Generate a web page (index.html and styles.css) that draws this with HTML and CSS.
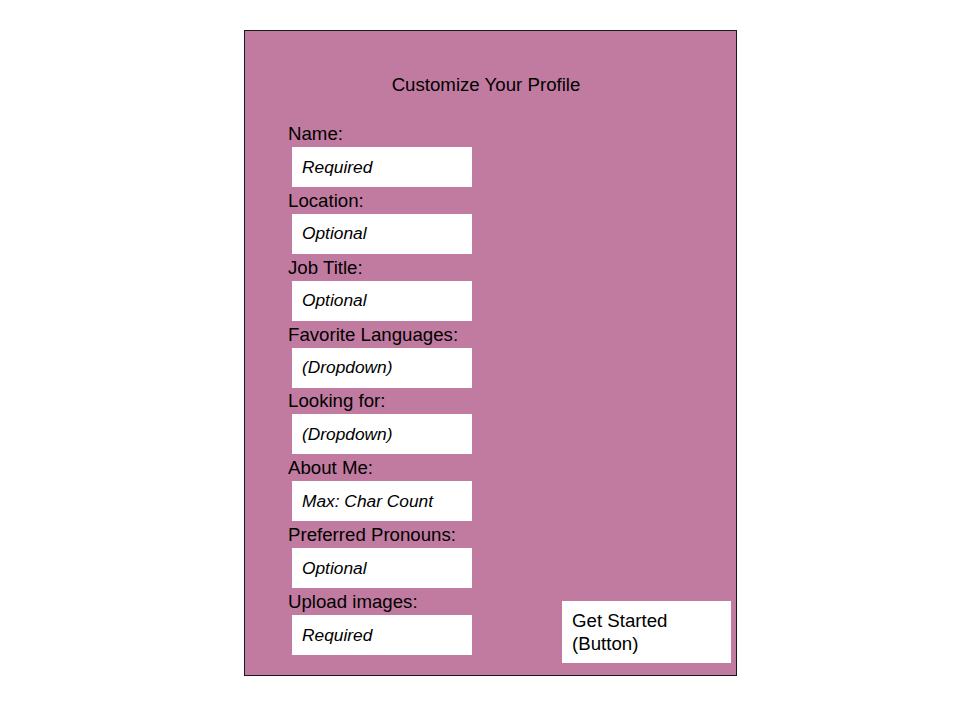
FILE: index.html
```html
<!DOCTYPE html>
<html>
<head>
<meta charset="utf-8">
<link rel="stylesheet" href="styles.css">
</head>
<body>
<div class="card">
  <div class="title">Customize Your Profile</div>
  <div class="body">
    <div class="form">
      <div class="field"><div class="label">Name:</div><div class="input">Required</div></div>
      <div class="field"><div class="label">Location:</div><div class="input">Optional</div></div>
      <div class="field"><div class="label">Job Title:</div><div class="input">Optional</div></div>
      <div class="field"><div class="label">Favorite Languages:</div><div class="input">(Dropdown)</div></div>
      <div class="field"><div class="label">Looking for:</div><div class="input">(Dropdown)</div></div>
      <div class="field"><div class="label">About Me:</div><div class="input">Max: Char Count</div></div>
      <div class="field"><div class="label">Preferred Pronouns:</div><div class="input">Optional</div></div>
      <div class="field"><div class="label">Upload images:</div><div class="input">Required</div></div>
    </div>
    <div class="button">Get Started<br>(Button)</div>
  </div>
</div>
</body>
</html>
```
FILE: styles.css
```css
html, body {
  margin: 0;
  padding: 0;
  background: #ffffff;
}
body {
  font-family: "Liberation Sans", Arial, sans-serif;
  color: #000000;
}
.card {
  box-sizing: border-box;
  width: 493px;
  height: 646px;
  margin: 30px 0 0 244px;
  border: 1px solid #1a1a1a;
  background: #c27ba0;
  display: flex;
  flex-direction: column;
  padding: 43px 5px 12px 43px;
}
.title {
  font-size: 18.67px;
  line-height: 22px;
  height: 22px;
  text-align: center;
  padding-right: 47px;
  margin-bottom: 27px;
}
.body {
  flex: 1;
  display: flex;
  justify-content: space-between;
  align-items: flex-end;
}
.form {
  display: flex;
  flex-direction: column;
  gap: 2.86px;
  align-self: flex-start;
}
.field {
  display: flex;
  flex-direction: column;
  gap: 3px;
}
.label {
  font-size: 18.67px;
  line-height: 21px;
  height: 21px;
}
.input {
  box-sizing: border-box;
  width: 180px;
  height: 40px;
  margin-left: 4px;
  background: #ffffff;
  padding: 0 0 0 10px;
  display: flex;
  align-items: center;
  font-size: 17.33px;
  font-style: italic;
}
.button {
  box-sizing: border-box;
  width: 169px;
  height: 62px;
  background: #ffffff;
  font-size: 18.67px;
  line-height: 23px;
  padding: 8px 0 0 10px;
}
```
